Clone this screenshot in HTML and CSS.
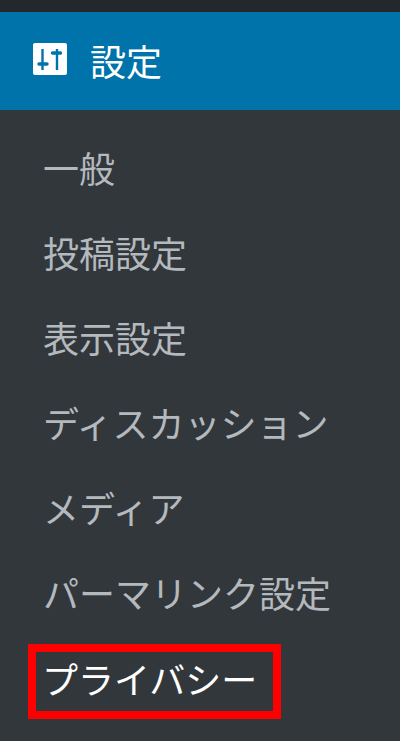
FILE: index.html
```html
<!DOCTYPE html>
<html lang="ja">
    <head>
        <meta charset="UTF-8" />
        <title>設定</title>
        <link rel="stylesheet" href="styles.css">
    </head>
    <body>
        <div class="menu-head">
            <svg class="menu-icon" viewBox="0 0 34 32" width="34" height="32">
                <rect width="34" height="32" rx="2" fill="#fff" />
                <path d="M9.500 6v21M24 6v21" stroke="#0073aa" stroke-width="2.400" fill="none" />
                <path d="M6 21h8M19.500 10h8" stroke="#0073aa" stroke-width="3.400" fill="none" stroke-linecap="round" />
            </svg>
            <span class="menu-title">設定</span>
        </div>
        <ul class="submenu">
            <li>一般</li>
            <li>投稿設定</li>
            <li>表示設定</li>
            <li>ディスカッション</li>
            <li>メディア</li>
            <li>パーマリンク設定</li>
            <li class="current"><span class="highlight">プライバシー</span></li>
        </ul>
    </body>
</html>
```
FILE: styles.css
```css
body {
    margin: 0;
    height: 741px;
    overflow: hidden;
    background-color: #32373c;
    font-family: "Noto Sans CJK JP", sans-serif;
    font-weight: 400;
    border-top: 12px solid #23282d;
    box-sizing: border-box;
}
.menu-head {
    display: flex;
    align-items: center;
    gap: 23px;
    height: 98px;
    padding-left: 33px;
    background-color: #0073aa;
    color: #fff;
}
.menu-icon {
    flex: none;
    margin-bottom: 4px;
}
.menu-title {
    font-size: 36px;
    margin-bottom: 2px;
}
.submenu {
    list-style: none;
    margin: 0;
    padding: 15px 0 0 43px;
}
.submenu li {
    height: 85px;
    line-height: 85px;
    font-size: 36px;
    color: #b4b9be;
    white-space: nowrap;
}
.submenu .current {
    color: #fff;
}
.highlight {
    display: inline-block;
    margin: 9px 0 0 -15px;
    padding: 0 16px 0 6px;
    height: 59px;
    line-height: 53px;
    border: 8px solid #f00;
    vertical-align: top;
}
```
